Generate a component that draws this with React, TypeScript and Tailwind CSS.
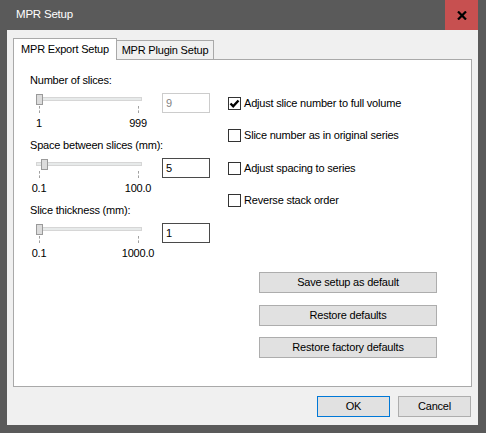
import React from 'react'

const font = { fontFamily: '"Liberation Sans", Arial, sans-serif' }

function Slider({ thumb }: { thumb: number }) {
  return (
    <div className="relative h-[20px] w-[106px]">
      <div className="absolute left-0 right-0 top-[4px] h-[4px] border border-[#d6d6d6] bg-[#e7eaea]" />
      <div
        className="absolute top-[1px] h-[11px] w-[7px] border border-[#9a9a9a] bg-[#dcdcdc]"
        style={{ left: thumb }}
      />
      <div className="absolute left-[3px] top-[13px] h-[7px] w-0 border-l border-dashed border-[#a0a0a0]" />
      <div className="absolute left-[102px] top-[13px] h-[7px] w-0 border-l border-dashed border-[#a0a0a0]" />
    </div>
  )
}

function SliderGroup({
  label,
  value,
  min,
  max,
  thumb,
  disabled,
  first,
}: {
  label: string
  value: string
  min: string
  max: string
  thumb: number
  disabled?: boolean
  first?: boolean
}) {
  return (
    <div className={first ? 'mt-[13px]' : 'mt-[8px]'}>
      <div className="h-[14px] leading-[14px]">{label}</div>
      <div className="mt-[6px] flex h-[20px]">
        <div className="ml-[6px]">
          <Slider thumb={thumb} />
        </div>
        <div
          className={
            'ml-[20px] flex h-[20px] w-[48px] items-center border bg-white pl-[3px] ' +
            (disabled ? 'border-[#cccccc] text-[#838383]' : 'border-[#4a4a4a] text-black')
          }
        >
          {value}
        </div>
      </div>
      <div className="mt-[3px] flex h-[14px] leading-[14px]">
        <span className="ml-[9px] flex w-0 justify-center whitespace-nowrap">{min}</span>
        <span className="ml-[99px] flex w-0 justify-center whitespace-nowrap">{max}</span>
      </div>
    </div>
  )
}

function Check({ label, checked, mt }: { label: string; checked?: boolean; mt: string }) {
  return (
    <div className={'flex h-[14px] items-center ' + mt}>
      <div className="flex h-[13px] w-[13px] items-center justify-center border border-[#333333] bg-white">
        {checked && (
          <svg width="11" height="11" viewBox="0 0 11 11">
            <path d="M1.5 5.5 L4.2 8.3 L9.5 2.5" fill="none" stroke="#000" strokeWidth="2.4" />
          </svg>
        )}
      </div>
      <span className="ml-[3px] whitespace-nowrap">{label}</span>
    </div>
  )
}

function Button({ children, mt, primary, w }: { children: string; mt?: string; primary?: boolean; w: string }) {
  return (
    <div
      className={
        'flex h-[21px] items-center justify-center border bg-[#e1e1e1] ' +
        w +
        ' ' +
        (mt ?? '') +
        ' ' +
        (primary ? 'border-[#0078d7]' : 'border-[#adadad]')
      }
    >
      {children}
    </div>
  )
}

export default function App() {
  return (
    <div
      className="flex h-[433px] w-[486px] flex-col bg-[#5a5a5a] text-[11px] tracking-[-0.2px] text-black"
      style={font}
    >
      <div className="flex h-[30px] items-center">
        <span className="ml-[16px] text-[11.5px] text-white">MPR Setup</span>
        <div className="ml-auto mr-[8px] flex h-[30px] w-[33px] items-center justify-center bg-[#c75050]">
          <svg width="10" height="9" viewBox="0 0 10 9">
            <path d="M1 0.5 L9 8.5 M9 0.5 L1 8.5" stroke="#000" strokeWidth="2.2" />
          </svg>
        </div>
      </div>
      <div className="mb-[8px] ml-[7px] mr-[8px] flex flex-1 flex-col bg-[#f0f0f0]">
        <div className="ml-[6px] mt-[8px] flex h-[21px] items-end">
          <div className="relative z-10 -mb-px flex h-[22px] w-[104px] items-center justify-center border border-b-0 border-[#a9a9a9] bg-white">
            MPR Export Setup
          </div>
          <div className="flex h-[19px] w-[97px] items-center justify-center border border-b-0 border-l-0 border-[#a9a9a9] bg-[#f0f0f0]">
            MPR Plugin Setup
          </div>
        </div>
        <div className="ml-[6px] flex h-[328px] w-[459px] border border-[#a9a9a9] bg-white">
          <div className="ml-[16px] w-[198px]">
            <SliderGroup first label="Number of slices:" value="9" min="1" max="999" thumb={0} disabled />
            <SliderGroup label="Space between slices (mm):" value="5" min="0.1" max="100.0" thumb={5} />
            <SliderGroup label="Slice thickness (mm):" value="1" min="0.1" max="1000.0" thumb={0} />
          </div>
          <div className="flex flex-col">
            <Check mt="mt-[36px]" checked label="Adjust slice number to full volume" />
            <Check mt="mt-[18px]" label="Slice number as in original series" />
            <Check mt="mt-[19px]" label="Adjust spacing to series" />
            <Check mt="mt-[18px]" label="Reverse stack order" />
            <div className="ml-[31px] flex flex-col">
              <Button w="w-[178px]" mt="mt-[65px]">Save setup as default</Button>
              <Button w="w-[178px]" mt="mt-[12px]">Restore defaults</Button>
              <Button w="w-[178px]" mt="mt-[11px]">Restore factory defaults</Button>
            </div>
          </div>
        </div>
        <div className="mt-[9px] flex justify-end gap-[8px] pr-[7px]">
          <Button w="w-[73px]" primary>OK</Button>
          <Button w="w-[73px]">Cancel</Button>
        </div>
      </div>
    </div>
  )
}
